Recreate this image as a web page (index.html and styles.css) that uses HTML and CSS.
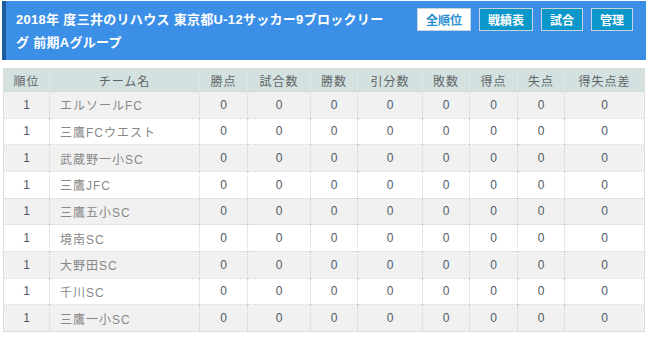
FILE: index.html
```html
<!DOCTYPE html>
<html lang="ja">
<head>
<meta charset="utf-8">
<link rel="stylesheet" href="styles.css">
</head>
<body>
<div class="page">
  <div class="head">
    <h1 class="title">2018年 度三井のリハウス 東京都U-12サッカー9ブロックリーグ 前期Aグループ</h1>
    <div class="btns">
      <span class="btn btn-on">全順位</span>
      <span class="btn">戦績表</span>
      <span class="btn">試合</span>
      <span class="btn">管理</span>
    </div>
  </div>
  <table class="rank">
    <colgroup>
      <col class="c46"><col class="c150"><col class="c48"><col class="c63"><col class="c47"><col class="c65"><col class="c47"><col class="c48"><col class="c47"><col>
    </colgroup>
    <thead>
      <tr><th>順位</th><th>チーム名</th><th>勝点</th><th>試合数</th><th>勝数</th><th>引分数</th><th>敗数</th><th>得点</th><th>失点</th><th>得失点差</th></tr>
    </thead>
    <tbody>
      <tr><td>1</td><td class="team">エルソールFC</td><td>0</td><td>0</td><td>0</td><td>0</td><td>0</td><td>0</td><td>0</td><td>0</td></tr>
      <tr><td>1</td><td class="team">三鷹FCウエスト</td><td>0</td><td>0</td><td>0</td><td>0</td><td>0</td><td>0</td><td>0</td><td>0</td></tr>
      <tr><td>1</td><td class="team">武蔵野一小SC</td><td>0</td><td>0</td><td>0</td><td>0</td><td>0</td><td>0</td><td>0</td><td>0</td></tr>
      <tr><td>1</td><td class="team">三鷹JFC</td><td>0</td><td>0</td><td>0</td><td>0</td><td>0</td><td>0</td><td>0</td><td>0</td></tr>
      <tr><td>1</td><td class="team">三鷹五小SC</td><td>0</td><td>0</td><td>0</td><td>0</td><td>0</td><td>0</td><td>0</td><td>0</td></tr>
      <tr><td>1</td><td class="team">境南SC</td><td>0</td><td>0</td><td>0</td><td>0</td><td>0</td><td>0</td><td>0</td><td>0</td></tr>
      <tr><td>1</td><td class="team">大野田SC</td><td>0</td><td>0</td><td>0</td><td>0</td><td>0</td><td>0</td><td>0</td><td>0</td></tr>
      <tr><td>1</td><td class="team">千川SC</td><td>0</td><td>0</td><td>0</td><td>0</td><td>0</td><td>0</td><td>0</td><td>0</td></tr>
      <tr><td>1</td><td class="team">三鷹一小SC</td><td>0</td><td>0</td><td>0</td><td>0</td><td>0</td><td>0</td><td>0</td><td>0</td></tr>
    </tbody>
  </table>
</div>
</body>
</html>
```

FILE: styles.css
```css
* { box-sizing: border-box; }
html, body { margin: 0; padding: 0; background: #fff; }
body {
  font-family: "Liberation Sans", "Noto Sans CJK JP", sans-serif;
  color: #555;
}
.page { padding: 1px 4px 0 2px; }
.head {
  display: flex;
  justify-content: space-between;
  align-items: flex-start;
  height: 59px;
  background: #3b8fe7;
  border-left: 4px solid #1c5c9f;
  padding: 7px 13px 0 10px;
}
.title {
  margin: 0;
  width: 374px;
  font-family: "Liberation Sans", "Noto Sans CJK JP", sans-serif;
  font-size: 13px;
  font-weight: bold;
  line-height: 23px;
  letter-spacing: 0.3px;
  line-break: strict;
  color: #fff;
}
.btns { display: flex; gap: 8px; }
.btn {
  display: block;
  height: 23px;
  line-height: 21px;
  padding: 0 8px;
  border: 1px solid #c7d3de;
  background: #0b97c9;
  color: #fff;
  font-family: "Noto Sans CJK JP", sans-serif;
  font-size: 12px;
  font-weight: bold;
}
.btn-on { background: #fff; color: #2a8fd0; }
.rank {
  margin: 8px 0 0 1px;
  width: 642px;
  table-layout: fixed;
  border-collapse: collapse;
  border: 1px solid #ddd;
  font-size: 12px;
}
.c46 { width: 46px; } .c150 { width: 150px; } .c48 { width: 48px; }
.c63 { width: 63px; } .c47 { width: 47px; } .c65 { width: 65px; }
th {
  height: 23px;
  background: #d4e1e1;
  color: #5f6566;
  font-family: "Noto Sans CJK JP", sans-serif;
  font-weight: normal;
  font-size: 12px;
  letter-spacing: 1px;
  border-left: 1px dotted #e6eeee;
  padding: 0;
}
td {
  height: 26.67px;
  padding: 0;
  text-align: center;
  color: #4f5a66;
  border-left: 1px dotted #d2d2d2;
  border-top: 1px dotted #d2d2d2;
}
tbody tr:nth-child(odd) td { background: #f1f1f1; }
td.team {
  text-align: left;
  padding-left: 10px;
  color: #888;
  letter-spacing: 1px;
  font-family: "Liberation Sans", "Noto Sans CJK JP", sans-serif;
}
```
